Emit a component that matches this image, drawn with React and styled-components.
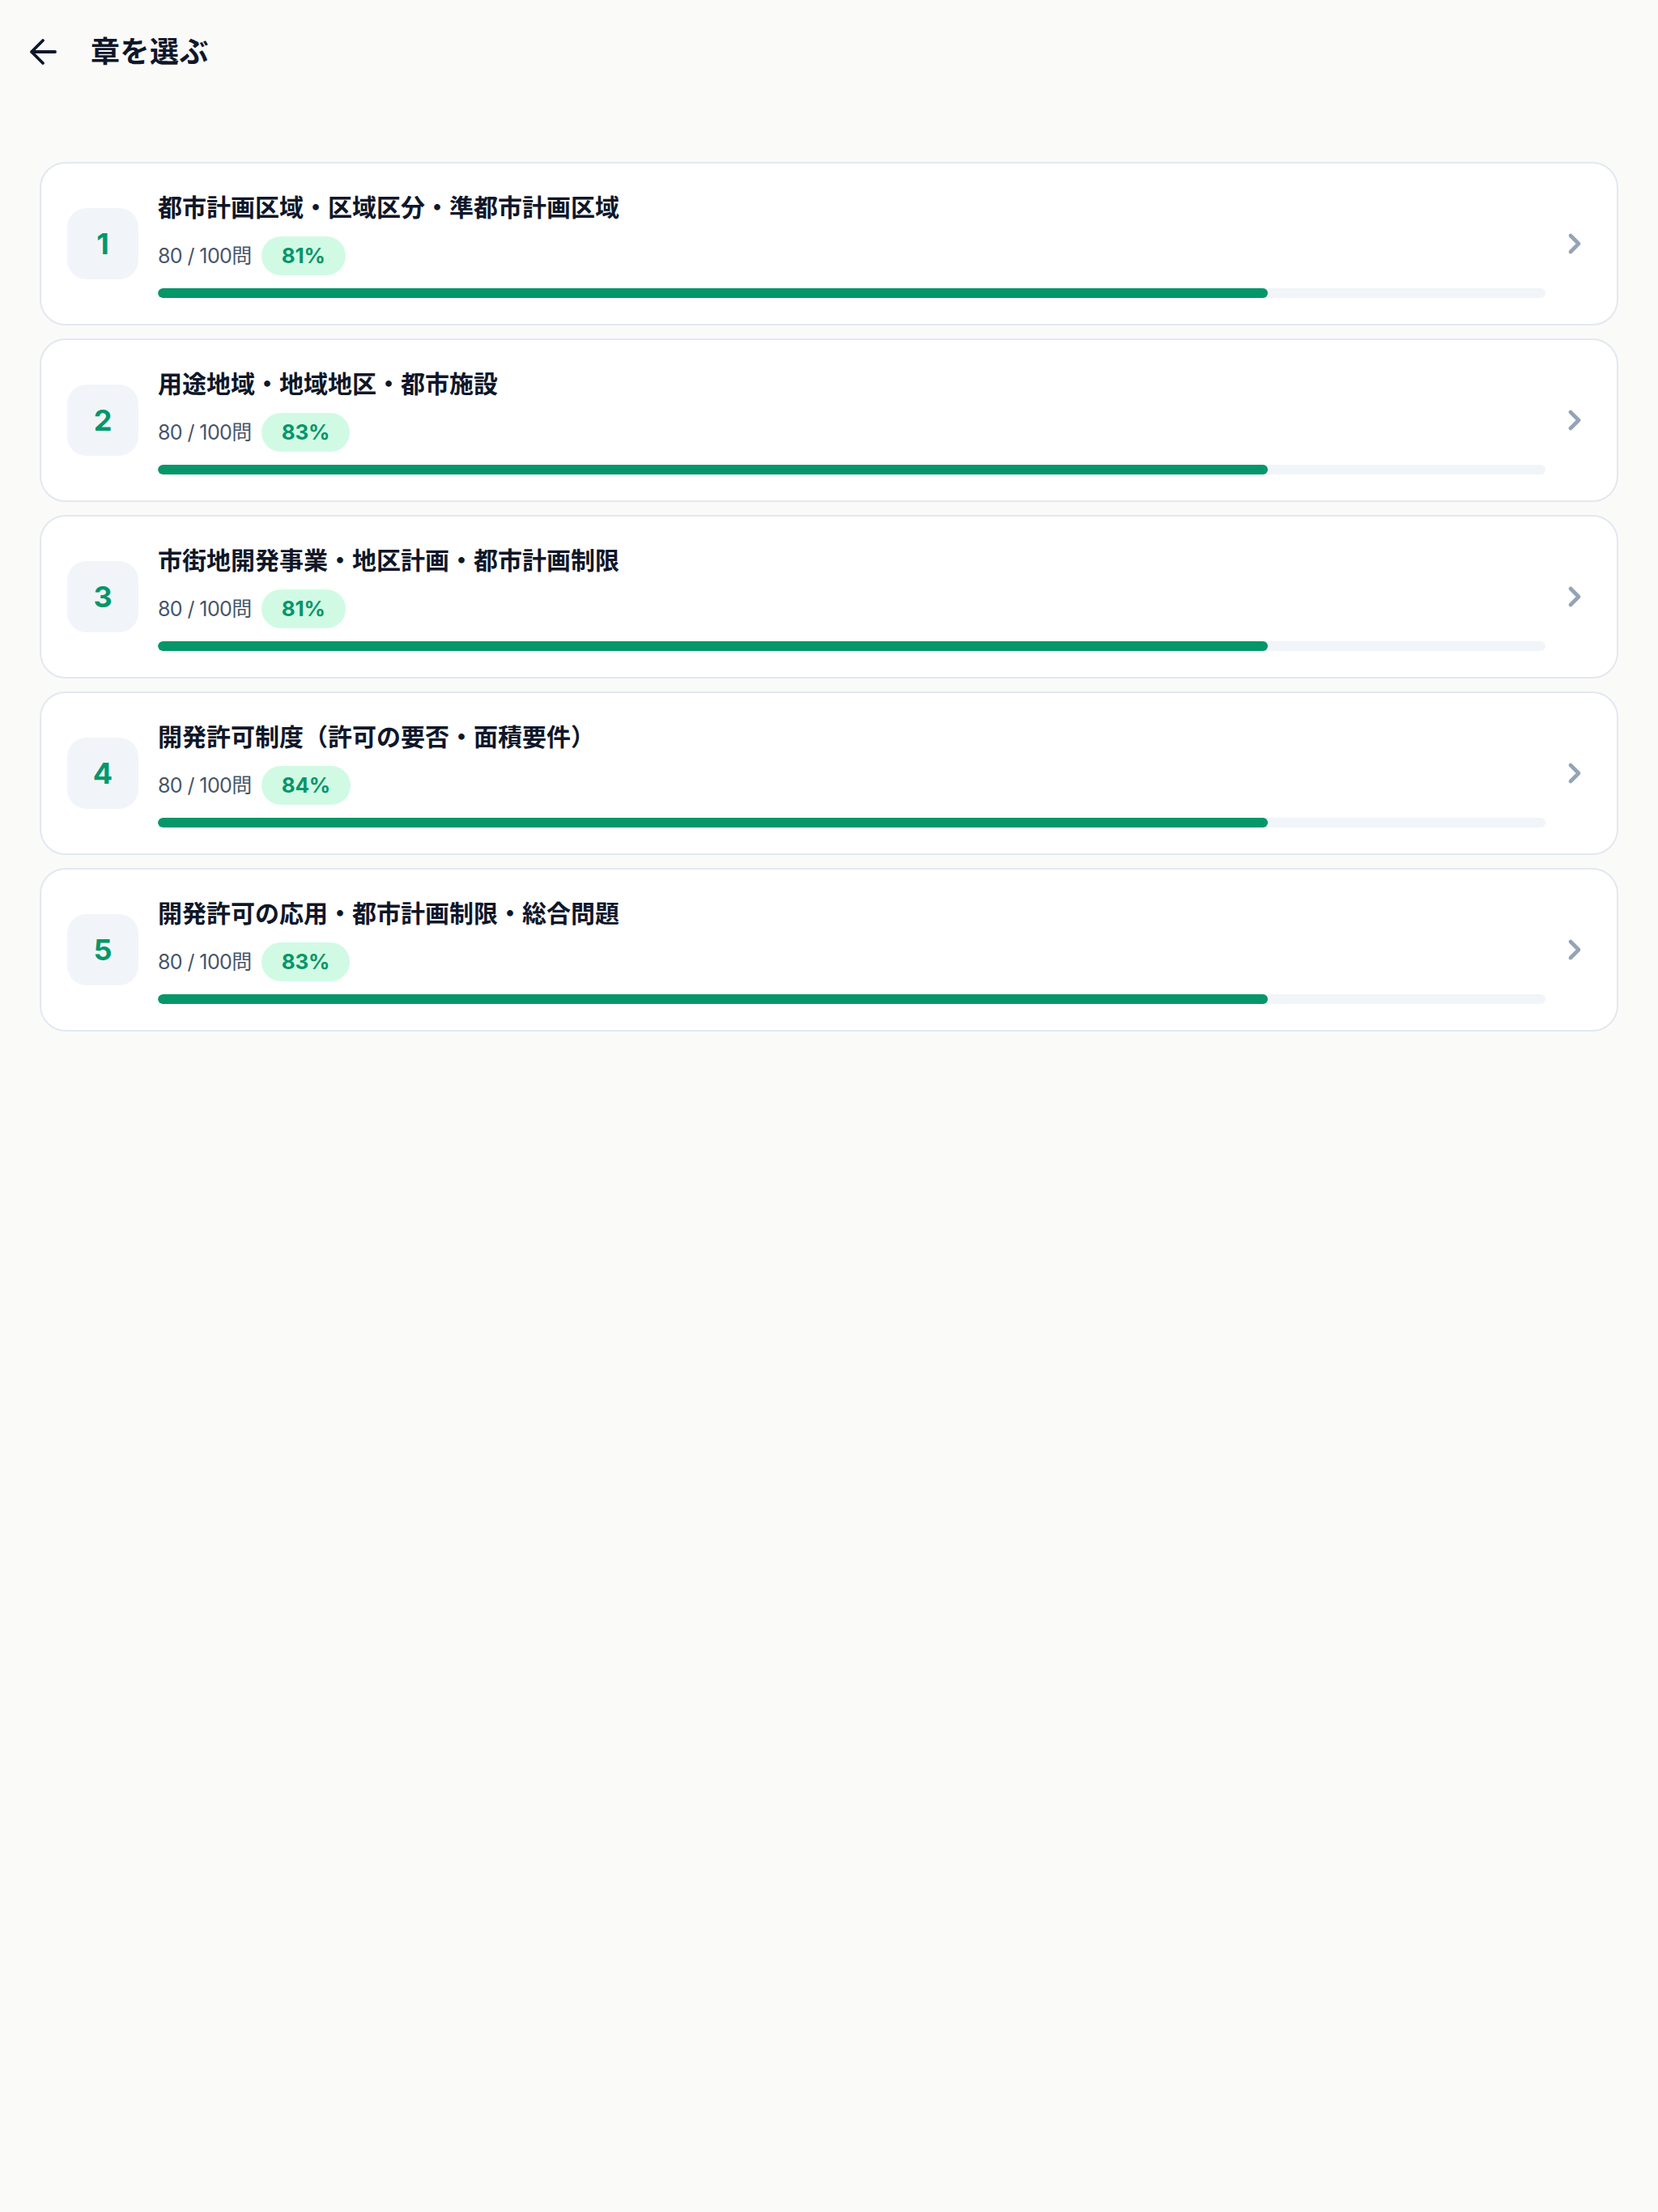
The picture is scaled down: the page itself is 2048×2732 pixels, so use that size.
import React from "react";
import styled, { createGlobalStyle } from "styled-components";
import { ChevronRight } from "lucide-react";

const chapters = [
	{ no: 1, title: "都市計画区域・区域区分・準都市計画区域", done: 80, total: 100, rate: 81 },
	{ no: 2, title: "用途地域・地域地区・都市施設", done: 80, total: 100, rate: 83 },
	{ no: 3, title: "市街地開発事業・地区計画・都市計画制限", done: 80, total: 100, rate: 81 },
	{ no: 4, title: "開発許可制度（許可の要否・面積要件）", done: 80, total: 100, rate: 84 },
	{ no: 5, title: "開発許可の応用・都市計画制限・総合問題", done: 80, total: 100, rate: 83 },
];

export default function App() {
	return (
		<>
			<GlobalStyle />
			<Page>
				<Header>
					<BackButton aria-label="戻る">
						<svg width="34" height="34" viewBox="0 0 34 34" fill="none">
							<path
								d="M32 17H3M17 3L3 17l14 14"
								stroke="#0f172a"
								strokeWidth="3.8"
								strokeLinecap="round"
								strokeLinejoin="round"
							/>
						</svg>
					</BackButton>
					<Title>章を選ぶ</Title>
				</Header>

				<List>
					{chapters.map((ch) => (
						<Card key={ch.no}>
							<NumberBadge>{ch.no}</NumberBadge>
							<Body>
								<ChapterTitle>{ch.title}</ChapterTitle>
								<Meta>
									<Count>
										{ch.done} / {ch.total}問
									</Count>
									<Rate>{ch.rate}%</Rate>
								</Meta>
								<Track>
									<Fill style={{ width: `${(ch.done / ch.total) * 100}%` }} />
								</Track>
							</Body>
							<Chevron>
								<ChevronRight size={40} strokeWidth={2.8} color="#94a3b8" />
							</Chevron>
						</Card>
					))}
				</List>
			</Page>
		</>
	);
}

const GlobalStyle = createGlobalStyle`
	* { box-sizing: border-box; }
	html, body {
		margin: 0;
		padding: 0;
		background: #fafaf9;
	}
	body {
		font-family: Inter, "Noto Sans CJK JP", sans-serif;
		color: #0f172a;
	}
`;

const Page = styled.div`
	min-height: 2732px;
	background: #fafaf9;
`;

const Header = styled.header`
	height: 128px;
	display: flex;
	align-items: center;
	gap: 42px;
	padding: 0 36px;
`;

const BackButton = styled.button`
	display: flex;
	align-items: center;
	justify-content: center;
	padding: 0;
	border: none;
	background: none;
	width: 34px;
	height: 34px;
	cursor: pointer;
`;

const Title = styled.h1`
	margin: 0;
	font-size: 36px;
	font-weight: 700;
	line-height: 48px;
	color: #0f172a;
	letter-spacing: 0.5px;
`;

const List = styled.div`
	display: flex;
	flex-direction: column;
	gap: 16px;
	padding: 72px 49px 0;
`;

const Card = styled.div`
	display: flex;
	align-items: center;
	gap: 24px;
	padding: 32px;
	background: #ffffff;
	border: 2px solid #e2e8f0;
	border-radius: 32px;
	cursor: pointer;
`;

const NumberBadge = styled.div`
	flex: none;
	width: 88px;
	height: 88px;
	border-radius: 24px;
	background: #f1f5f9;
	display: flex;
	align-items: center;
	justify-content: center;
	font-size: 36px;
	font-weight: 700;
	color: #059669;
`;

const Body = styled.div`
	flex: 1;
	min-width: 0;
	display: flex;
	flex-direction: column;
`;

const ChapterTitle = styled.div`
	font-size: 30px;
	line-height: 44px;
	font-weight: 700;
	color: #0f172a;
`;

const Meta = styled.div`
	display: flex;
	align-items: center;
	gap: 12px;
	margin-top: 14px;
`;

const Count = styled.span`
	font-size: 25px;
	line-height: 36px;
	letter-spacing: -0.6px;
	color: #475569;
`;

const Rate = styled.span`
	padding: 6px 25px;
	border-radius: 999px;
	background: #d1fae5;
	color: #059669;
	font-size: 26px;
	line-height: 36px;
	font-weight: 700;
	letter-spacing: -0.2px;
`;

const Track = styled.div`
	margin-top: 16px;
	height: 12px;
	border-radius: 999px;
	background: #f1f5f9;
	overflow: hidden;
`;

const Fill = styled.div`
	height: 100%;
	border-radius: 999px;
	background: #059669;
`;

const Chevron = styled.div`
	flex: none;
	width: 40px;
	height: 40px;
	display: flex;
	align-items: center;
	justify-content: center;
	margin-left: -8px;
`;
